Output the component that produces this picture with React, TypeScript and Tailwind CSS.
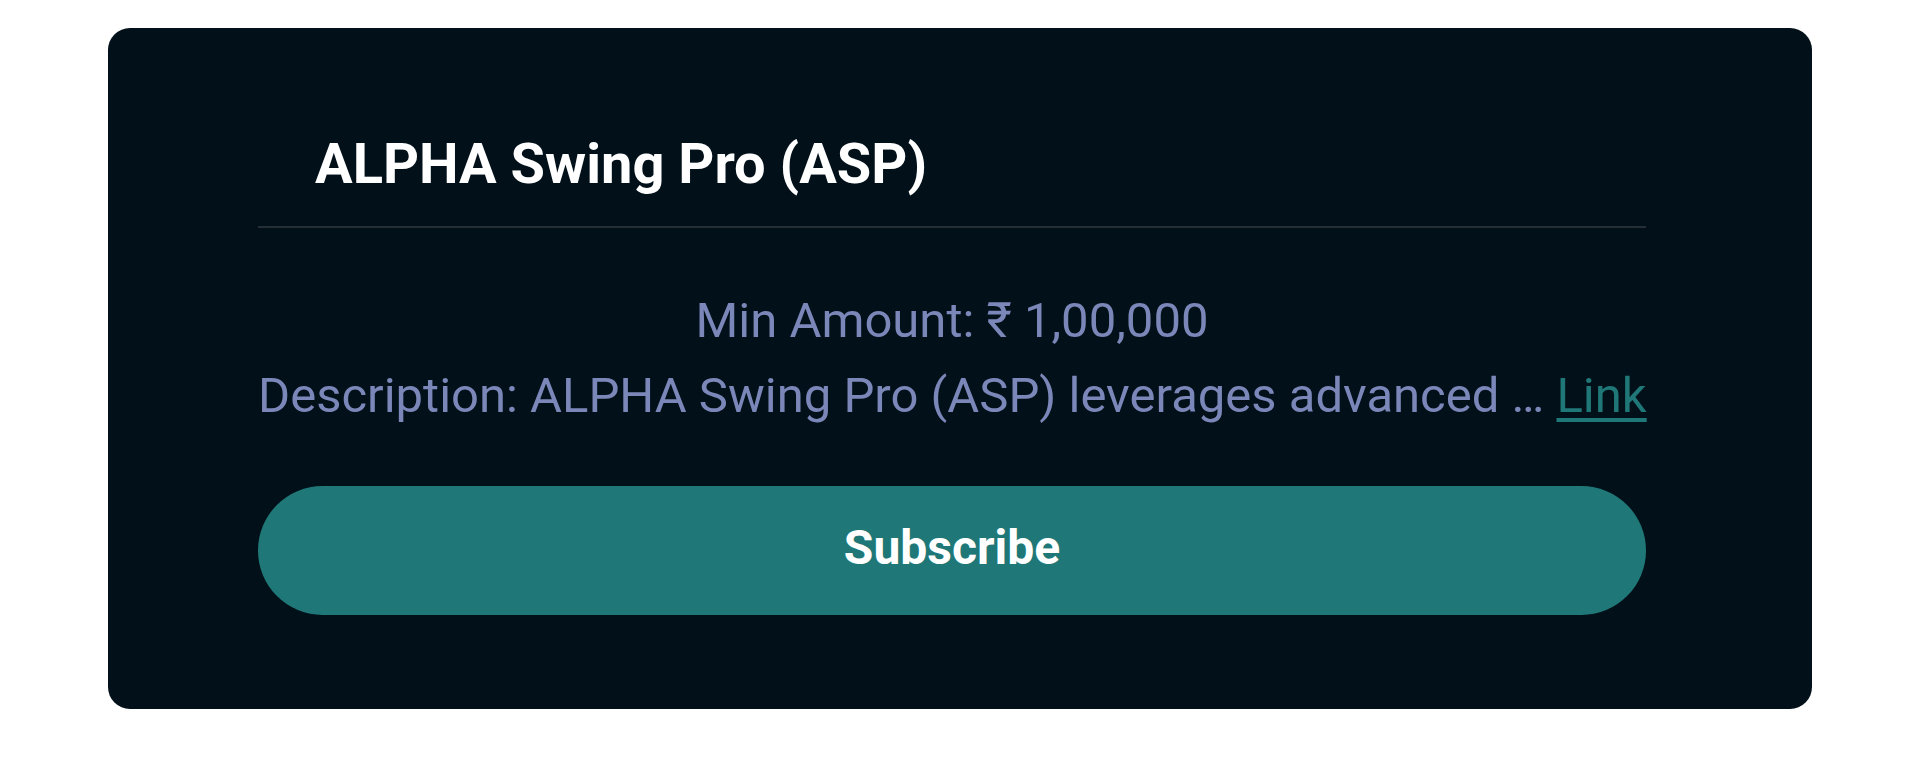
import { useState } from 'react';

export default function App() {
  const [subscribed, setSubscribed] = useState(false);

  return (
    <div className="w-full min-h-[764px] bg-white pt-[28px] px-[108px] font-['Roboto','Liberation_Sans',sans-serif]">
      {/* plan card */}
      <div className="h-[681px] rounded-[22px] bg-[#02101a] pt-[104px] pb-[94px] pl-[150px] pr-[166px] flex flex-col">
        <h2 className="pl-[57px] text-[56px] leading-[64px] font-bold text-white">
          ALPHA Swing Pro (ASP)
        </h2>
        <div className="mt-[30px] h-[2px] bg-[#262e35]" />

        <div className="mt-[55px] text-center text-[49px] leading-[75px] text-[#7b87b8]">
          <p>Min Amount: ₹ 1,00,000</p>
          <p className="whitespace-nowrap">
            Description: ALPHA Swing Pro (ASP) leverages advanced …{' '}
            <a href="#" className="text-[#1f7877] underline underline-offset-[6px]">Link</a>
          </p>
        </div>

        <button
          onClick={() => setSubscribed(!subscribed)}
          className="mt-[53px] h-[129px] w-full rounded-full bg-[#1f7877] pb-[5px] text-[48px] font-bold text-white"
        >
          Subscribe
        </button>
      </div>
    </div>
  );
}
